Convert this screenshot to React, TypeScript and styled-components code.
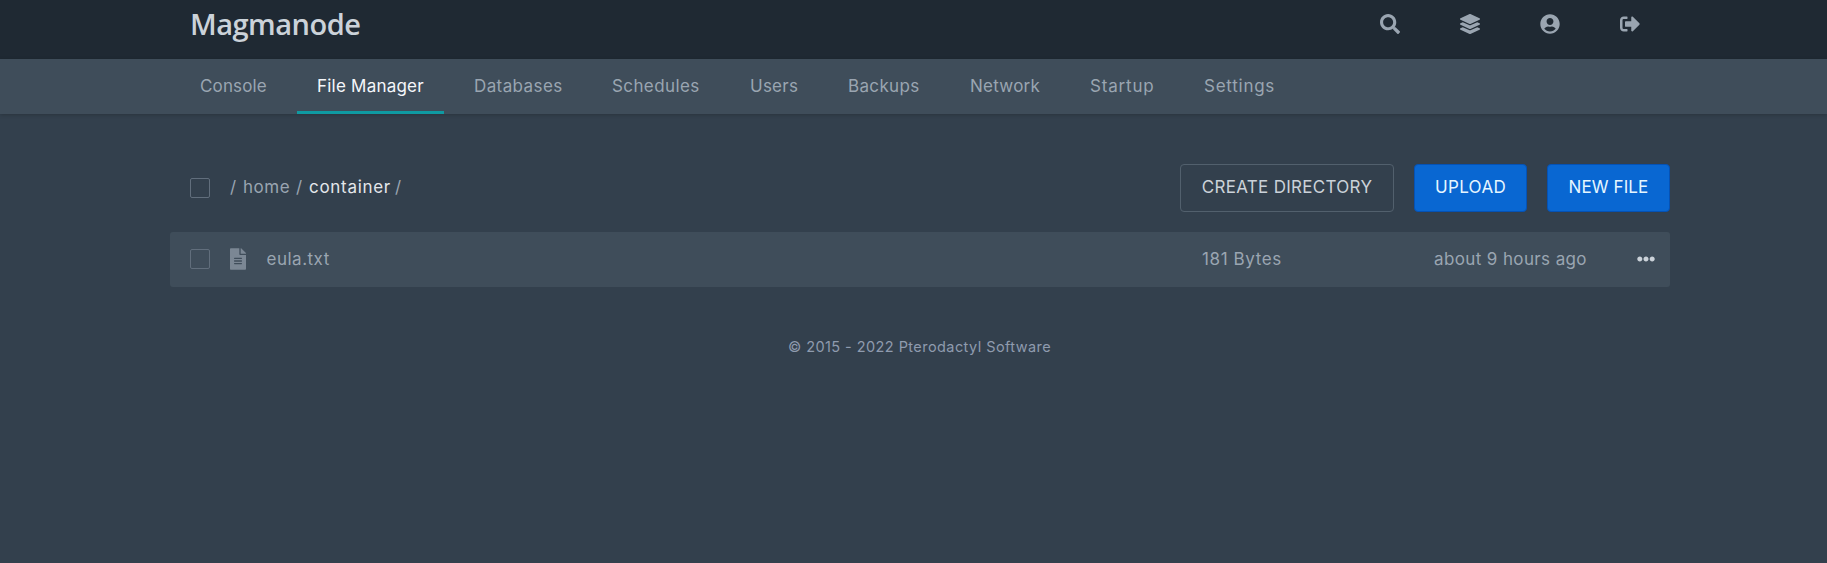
import React from "react";
import styled, { createGlobalStyle } from "styled-components";
import { FaSearch, FaLayerGroup, FaUserCircle, FaSignOutAlt, FaFileAlt, FaEllipsisH } from "react-icons/fa";

const GlobalStyle = createGlobalStyle`
  * { box-sizing: border-box; }
  body {
    margin: 0;
    min-height: 100vh;
    background: #33404d;
    font-family: Inter, Roboto, sans-serif;
    font-size: 17px;
    line-height: 25px;
  }
`;

const Header = styled.header`
  height: 59px;
  padding: 0 157px 0 190px;
  display: flex;
  align-items: flex-start;
  justify-content: space-between;
  background: #1f2933;
`;

const Logo = styled.div`
  padding-top: 3px;
  font-family: "Open Sans", sans-serif;
  font-weight: 600;
  font-size: 29px;
  line-height: 42px;
  letter-spacing: -0.5px;
  color: #cbd2d9;
`;

const HeaderLinks = styled.nav`
  display: flex;
`;

const HeaderLink = styled.a`
  width: 80px;
  height: 48px;
  display: flex;
  align-items: center;
  justify-content: center;
  font-size: 20px;
  color: #9aa5b1;
`;

const SubNav = styled.nav`
  height: 55px;
  padding-left: 180px;
  display: flex;
  gap: 10px;
  background: #3f4d5a;
  box-shadow: 0 1px 4px rgba(0, 0, 0, 0.2);
`;

const SubNavLink = styled.a<{ $width: number; $tracking: number; $active?: boolean }>`
  width: ${(p) => p.$width}px;
  padding: 15px 0 0 20px;
  white-space: nowrap;
  letter-spacing: ${(p) => p.$tracking}px;
  color: ${(p) => (p.$active ? "#f5f7fa" : "#9aa5b1")};
  box-shadow: ${(p) => (p.$active ? "inset 0 -3px #0f9aa2" : "none")};
`;

const Content = styled.main`
  width: 1500px;
  margin: 50px 0 0 170px;
`;

const Toolbar = styled.div`
  height: 48px;
  display: flex;
  align-items: center;
  padding-left: 20px;
`;

const Checkbox = styled.span`
  flex: none;
  width: 20px;
  height: 20px;
  border: 1px solid #616e7c;
  border-radius: 2px;
`;

const Breadcrumbs = styled.div`
  display: flex;
  flex: 1;
  margin: -2px 0 0 20px;
  color: #9aa5b1;
`;

const Slash = styled.span`
  width: 13px;
  flex: none;
`;

const Crumb = styled.span<{ $width: number; $tracking: number; $current?: boolean }>`
  width: ${(p) => p.$width}px;
  letter-spacing: ${(p) => p.$tracking}px;
  color: ${(p) => (p.$current ? "#e4e7eb" : "inherit")};
`;

const Actions = styled.div`
  display: flex;
  gap: 20px;
`;

const Button = styled.button<{ $width: number; $tracking: number; $primary?: boolean }>`
  width: ${(p) => p.$width}px;
  height: 48px;
  padding: 0 0 2px;
  border: 1px solid ${(p) => (p.$primary ? "#0552b5" : "#52606d")};
  border-radius: 4px;
  background: ${(p) => (p.$primary ? "#0967d2" : "transparent")};
  color: ${(p) => (p.$primary ? "#e6f6ff" : "#cbd2d9")};
  font: inherit;
  letter-spacing: ${(p) => p.$tracking}px;
  white-space: nowrap;
`;

const FileRow = styled.div`
  height: 55px;
  margin-top: 20px;
  padding: 0 15px 1px 20px;
  display: flex;
  align-items: center;
  border-radius: 3px;
  background: #3f4d5a;
  color: #9aa5b1;
`;

const FileIcon = styled.span`
  width: 36.5px;
  margin-left: 20px;
  height: 22px;
  color: #7b8794;
  svg { display: block; width: 16px; height: 22px; }
`;

const Cell = styled.span<{ $width?: number; $tracking: number }>`
  ${(p) => (p.$width ? `width: ${p.$width}px;` : "flex: 1;")}
  white-space: nowrap;
  letter-spacing: ${(p) => p.$tracking}px;
`;

const More = styled.span`
  display: flex;
  color: #cbd2d9;
  svg { width: 18px; height: 18px; }
`;

const Footer = styled.footer`
  margin: 49px 0 0 12px;
  padding-left: 606px;
  font-size: 14.5px;
  line-height: 22px;
  letter-spacing: 0.43px;
  color: #8f9bae;
`;

const tabs = [
  { label: "Console", width: 107, tracking: 0.15 },
  { label: "File Manager", width: 147, tracking: 0.22, active: true },
  { label: "Databases", width: 128, tracking: 0.4 },
  { label: "Schedules", width: 128, tracking: 0.4 },
  { label: "Users", width: 88, tracking: 0.25 },
  { label: "Backups", width: 112, tracking: 0.35 },
  { label: "Network", width: 110, tracking: 0.25 },
  { label: "Startup", width: 104, tracking: 0.83 },
  { label: "Settings", width: 112, tracking: 0.75 },
];

export default function App() {
  return (
    <>
      <GlobalStyle />
      <Header>
        <Logo>Magmanode</Logo>
        <HeaderLinks>
          <HeaderLink><FaSearch /></HeaderLink>
          <HeaderLink><FaLayerGroup /></HeaderLink>
          <HeaderLink><FaUserCircle /></HeaderLink>
          <HeaderLink><FaSignOutAlt /></HeaderLink>
        </HeaderLinks>
      </Header>
      <SubNav>
        {tabs.map((t) => (
          <SubNavLink key={t.label} $width={t.width} $tracking={t.tracking} $active={t.active}>
            {t.label}
          </SubNavLink>
        ))}
      </SubNav>
      <Content>
        <Toolbar>
          <Checkbox />
          <Breadcrumbs>
            <Slash>/</Slash>
            <Crumb $width={53} $tracking={0.55}>home</Crumb>
            <Slash>/</Slash>
            <Crumb $width={86} $tracking={0.7} $current>container</Crumb>
            <Slash>/</Slash>
          </Breadcrumbs>
          <Actions>
            <Button $width={214} $tracking={0.3}>CREATE DIRECTORY</Button>
            <Button $width={113} $tracking={0.35} $primary>UPLOAD</Button>
            <Button $width={123} $tracking={0.1} $primary>NEW FILE</Button>
          </Actions>
        </Toolbar>
        <FileRow>
          <Checkbox />
          <FileIcon><FaFileAlt /></FileIcon>
          <Cell $tracking={0.5}>eula.txt</Cell>
          <Cell $width={232} $tracking={0.6}>181 Bytes</Cell>
          <Cell $width={203} $tracking={0.38}>about 9 hours ago</Cell>
          <More><FaEllipsisH /></More>
        </FileRow>
        <Footer>© 2015 - 2022 Pterodactyl Software</Footer>
      </Content>
    </>
  );
}
